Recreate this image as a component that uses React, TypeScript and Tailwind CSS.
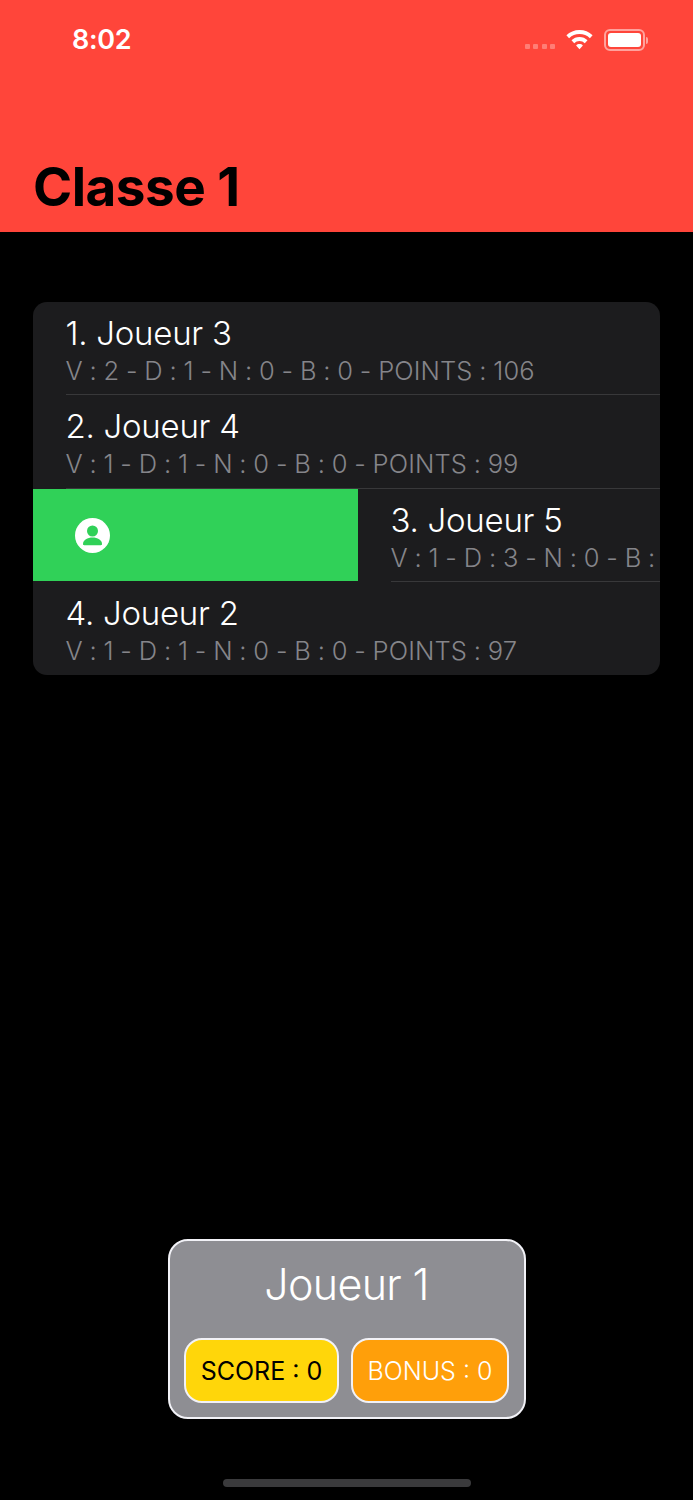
const players = [
  { title: '1. Joueur 3', stats: 'V : 2 - D : 1 - N : 0 - B : 0 - POINTS : 106' },
  { title: '2. Joueur 4', stats: 'V : 1 - D : 1 - N : 0 - B : 0 - POINTS : 99' },
];

function Row({ title, stats, line = true }: { title: string; stats: string; line?: boolean }) {
  return (
    <div className="h-[93.3px] pl-[32.5px] flex flex-col">
      <div className={`h-full flex flex-col pt-[12px] ${line ? 'border-b border-[#38383a]' : ''}`}>
        <div className="text-[33px] leading-[39px] font-light text-white tracking-[-0.25px] whitespace-nowrap">{title}</div>
        <div className="text-[25.5px] leading-[35px] font-light text-[#85858a] tracking-[0.1px] [word-spacing:-0.55px] whitespace-nowrap">{stats}</div>
      </div>
    </div>
  );
}

export default function App() {
  return (
    <div className="w-[693px] h-[1500px] bg-black flex flex-col font-['Inter',sans-serif] overflow-hidden">
      {/* nav bar */}
      <header className="h-[232px] shrink-0 bg-[#ff453a] flex flex-col">
        <div className="h-[80px] pl-[72px] pr-[45px] flex items-center justify-between">
          <span className="text-[27px] font-semibold text-white tracking-[-0.3px]">8:02</span>
          <div className="flex items-center gap-[11px]">
            <div className="flex gap-[3.5px] mt-[13px]">
              <span className="w-[5px] h-[5px] rounded-[1px] bg-white/30" />
              <span className="w-[5px] h-[5px] rounded-[1px] bg-white/30" />
              <span className="w-[5px] h-[5px] rounded-[1px] bg-white/30" />
              <span className="w-[5px] h-[5px] rounded-[1px] bg-white/30" />
            </div>
            <svg width="27" height="20" viewBox="0 0 27 20" fill="white">
              <path d="M13.5 0C8.4 0 3.8 2 .4 5.3l2.7 2.9A15 15 0 0 1 13.5 4a15 15 0 0 1 10.4 4.2l2.7-2.9A19 19 0 0 0 13.5 0z" />
              <path d="M13.5 7c-3.1 0-6 1.200-8 3.300l2.700 2.900a7.700 7.700 0 0 1 10.600 0l2.700-2.900c-2-2.100-4.900-3.300-8-3.300z" />
              <path d="M13.500 14c-1.300 0-2.500.5-3.400 1.400l3.400 3.800 3.400-3.800c-.9-.9-2.100-1.400-3.400-1.400z" />
            </svg>
            <div className="flex items-center gap-[1px]">
              <div className="w-[41px] h-[22px] rounded-[6px] border-2 border-white/50 p-[2px]">
                <div className="w-full h-full rounded-[3px] bg-white" />
              </div>
              <div className="w-[2px] h-[7px] rounded-r-[2px] bg-white/50" />
            </div>
          </div>
        </div>
        <h1 className="pl-[33px] mt-[72px] text-[53px] leading-[70px] font-bold text-black tracking-[-0.5px]">Classe 1</h1>
      </header>

      {/* classement */}
      <div className="mt-[70px] mx-[33px] rounded-[14px] bg-[#1c1c1e] overflow-hidden">
        {players.map((p) => (
          <Row key={p.title} title={p.title} stats={p.stats} />
        ))}
        <div className="h-[93.3px] flex">
          <div className="w-[325px] shrink-0 bg-[#30d158] flex items-center pl-[42px] my-[0.5px]">
            <svg width="35" height="35" viewBox="0 0 35 35">
              <circle cx="17.500" cy="17.500" r="17.500" fill="white" />
              <circle cx="17.500" cy="13" r="5.500" fill="#30d158" />
              <path d="M8 26c0-4 4.500-6.500 9.500-6.500S27 22 27 26c0 .8-.5 1.200-1.200 1.200H9.200C8.500 27.200 8 26.800 8 26z" fill="#30d158" />
            </svg>
          </div>
          <div className="flex-1 min-w-0">
            <Row title="3. Joueur 5" stats="V : 1 - D : 3 - N : 0 - B :" />
          </div>
        </div>
        <Row title="4. Joueur 2" stats="V : 1 - D : 1 - N : 0 - B : 0 - POINTS : 97" line={false} />
      </div>

      {/* joueur courant */}
      <div className="mt-auto ml-[168px] w-[358px] h-[180px] rounded-[20px] border-2 border-[#f2f2f7] bg-[#8e8e93] flex flex-col items-center pl-[14px] pr-[15px]">
        <div className="mt-[13px] text-[43px] leading-[60px] font-light text-white tracking-[-0.7px]">Joueur 1</div>
        <div className="mt-[24px] w-full flex gap-[12px]">
          <div className="w-[155px] h-[65px] pt-[2px] rounded-[18px] border-2 border-[#f2f2f7] bg-[#ffd60a] flex items-center justify-center text-[25px] text-black">SCORE : 0</div>
          <div className="flex-1 h-[65px] pt-[2px] rounded-[18px] border-2 border-[#f2f2f7] bg-[#ff9f0a] flex items-center justify-center text-[25px] font-light text-white">BONUS : 0</div>
        </div>
      </div>

      {/* home indicator */}
      <div className="mt-[60px] mb-[13px] ml-[223px] w-[248px] h-[8px] rounded-full bg-[#3a3a3c]" />
    </div>
  );
}
